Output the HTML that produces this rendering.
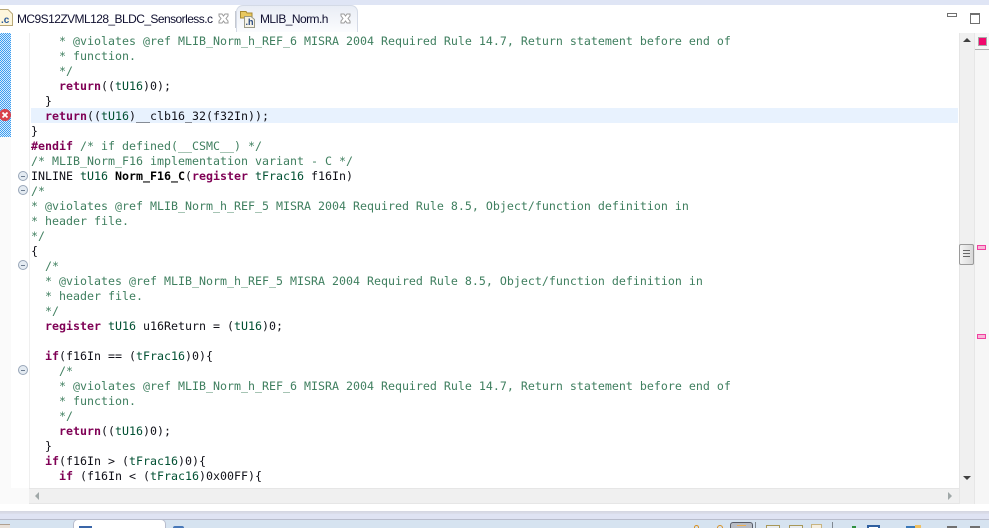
<!DOCTYPE html>
<html><head><meta charset="utf-8"><style>
html,body{margin:0;padding:0;background:#fff;}
body{width:989px;height:528px;position:relative;overflow:hidden;font-family:"Liberation Sans",sans-serif;}
div{position:absolute;}
.l{left:31px;height:15px;white-space:pre;font:11.63px/15px "DejaVu Sans Mono","Liberation Mono",monospace;color:#101018;margin-top:1px;}
.c{color:#3f7f5f}.k{color:#7f0055;font-weight:bold}.t{color:#005032}.b{font-weight:bold;color:#000}
.f{left:18px;width:8px;height:8px;border:1px solid #98a6b8;border-radius:50%;background:#e4ebf2;}
.f:after{content:"";position:absolute;left:2px;top:3.5px;width:4px;height:1px;background:#6c7c90;}
.tab{font-size:12px;color:#101030;white-space:pre;line-height:16px;letter-spacing:-.56px;}
</style></head><body>
<div style="left:0;top:0;width:989px;height:5px;background:#dfe5f5"></div>

<!-- tabs -->
<div style="left:236px;top:5px;width:122px;height:27px;background:linear-gradient(#e9edf5,#fbfcfe);border:1px solid #d4dae6;border-bottom:0;border-radius:7px 7px 0 0;box-sizing:border-box"></div>
<div style="left:235px;top:11px;width:1px;height:17px;background:#c4c8d0"></div>
<svg style="position:absolute;left:0;top:9px" width="14" height="18"><path d="M-2 .5H8L12.500 5V16.500H-2Z" fill="#fdf6dc" stroke="#b9a878"/><text x="1" y="14" font-size="10" font-weight="bold" fill="#2a5a9a" font-family="Liberation Sans">.c</text></svg>
<div class="tab" style="left:17px;top:11px">MC9S12ZVML128_BLDC_Sensorless.c</div>
<svg style="position:absolute;left:218px;top:13px" width="11" height="11"><path d="M1 1L4 1L5.500 3L7 1L10 1L10 3L8 5.500L10 8L10 10L7 10L5.500 8L4 10L1 10L1 8L3 5.500L1 3Z" fill="#fff" stroke="#9a9a9a"/></svg>
<svg style="position:absolute;left:240px;top:10px" width="16" height="18"><path d="M.5 1.500H6L7 3H12V8H.5Z" fill="#e8c860" stroke="#a88a30"/><path d="M4.500 6.500H11L14.500 9.500V17.500H4.500Z" fill="#f6f3e6" stroke="#9a9a88"/><text x="5.500" y="15" font-size="9" font-weight="bold" fill="#2a4a80" font-family="Liberation Sans">.h</text></svg>
<div class="tab" style="left:260px;top:11px">MLIB_Norm.h</div>
<svg style="position:absolute;left:340px;top:13px" width="11" height="11"><path d="M1 1L4 1L5.500 3L7 1L10 1L10 3L8 5.500L10 8L10 10L7 10L5.500 8L4 10L1 10L1 8L3 5.500L1 3Z" fill="#fff" stroke="#9a9a9a"/></svg>
<!-- min/max -->
<div style="left:947px;top:13px;width:8px;height:2px;border:1px solid #707070"></div>
<div style="left:970px;top:13px;width:8px;height:8px;border:1px solid #707070;border-top-width:2px"></div>

<!-- left ruler -->
<div style="left:0;top:33px;width:11px;height:104px;background-color:#5fb0f0;background-image:repeating-conic-gradient(#3c9cf0 0 25%,#d8ecfc 0 50%);background-size:2px 2px"></div>
<div style="left:0;top:137px;width:11px;height:351px;background:#fafafa"></div>
<div style="left:29px;top:33px;width:1px;height:455px;background:#efefef"></div>
<!-- highlight -->
<div style="left:31px;top:108px;width:927px;height:15px;background:#e8f2fe"></div>
<!-- error -->
<div style="left:-1px;top:109px;width:12px;height:12px;border-radius:50%;background:#d8404a"></div>
<svg style="position:absolute;left:-1px;top:109px" width="12" height="12"><path d="M3.500 3.500L8.500 8.500M8.500 3.500L3.500 8.500" stroke="#fff" stroke-width="1.800"/></svg>

<!-- code -->
<div class="l" style="top:33px"><span class="c">    * @violates @ref MLIB_Norm_h_REF_6 MISRA 2004 Required Rule 14.7, Return statement before end of</span></div>
<div class="l" style="top:48px"><span class="c">    * function.</span></div>
<div class="l" style="top:63px"><span class="c">    */</span></div>
<div class="l" style="top:78px">    <span class="k">return</span>((<span class="t">tU16</span>)0);</div>
<div class="l" style="top:93px">  }</div>
<div class="l" style="top:108px">  <span class="k">return</span>((<span class="t">tU16</span>)__clb16_32(f32In));</div>
<div class="l" style="top:123px">}</div>
<div class="l" style="top:138px"><span class="k">#endif</span> <span class="c">/* if defined(__CSMC__) */</span></div>
<div class="l" style="top:153px"><span class="c">/* MLIB_Norm_F16 implementation variant - C */</span></div>
<div class="l" style="top:168px">INLINE <span class="t">tU16</span> <span class="b">Norm_F16_C</span>(<span class="k">register</span> <span class="t">tFrac16</span> f16In)</div>
<div class="l" style="top:183px"><span class="c">/*</span></div>
<div class="l" style="top:198px"><span class="c">* @violates @ref MLIB_Norm_h_REF_5 MISRA 2004 Required Rule 8.5, Object/function definition in</span></div>
<div class="l" style="top:213px"><span class="c">* header file.</span></div>
<div class="l" style="top:228px"><span class="c">*/</span></div>
<div class="l" style="top:243px">{</div>
<div class="l" style="top:258px"><span class="c">  /*</span></div>
<div class="l" style="top:273px"><span class="c">  * @violates @ref MLIB_Norm_h_REF_5 MISRA 2004 Required Rule 8.5, Object/function definition in</span></div>
<div class="l" style="top:288px"><span class="c">  * header file.</span></div>
<div class="l" style="top:303px"><span class="c">  */</span></div>
<div class="l" style="top:318px">  <span class="k">register</span> <span class="t">tU16</span> u16Return = (<span class="t">tU16</span>)0;</div>
<div class="l" style="top:348px">  <span class="k">if</span>(f16In == (<span class="t">tFrac16</span>)0){</div>
<div class="l" style="top:363px"><span class="c">    /*</span></div>
<div class="l" style="top:378px"><span class="c">    * @violates @ref MLIB_Norm_h_REF_6 MISRA 2004 Required Rule 14.7, Return statement before end of</span></div>
<div class="l" style="top:393px"><span class="c">    * function.</span></div>
<div class="l" style="top:408px"><span class="c">    */</span></div>
<div class="l" style="top:423px">    <span class="k">return</span>((<span class="t">tU16</span>)0);</div>
<div class="l" style="top:438px">  }</div>
<div class="l" style="top:453px">  <span class="k">if</span>(f16In &gt; (<span class="t">tFrac16</span>)0){</div>
<div class="l" style="top:468px">    <span class="k">if</span> (f16In &lt; (<span class="t">tFrac16</span>)0x00FF){</div>

<!-- fold markers -->
<div class="f" style="top:171px"></div>
<div class="f" style="top:185px"></div>
<div class="f" style="top:260px"></div>
<div class="f" style="top:365px"></div>

<!-- horizontal scrollbar -->
<div style="left:29px;top:488px;width:930px;height:16px;background:#f0f0f0;border-top:1px solid #e6e6e6;border-bottom:1px solid #e6e6e6;box-sizing:border-box"></div>
<div style="left:35px;top:492px;width:0;height:0;border:4px solid transparent;border-right:4px solid #a0a8a8;border-left:0"></div>
<div style="left:948px;top:492px;width:0;height:0;border:4px solid transparent;border-left:4px solid #a0a8a8;border-right:0"></div>
<div style="left:0;top:488px;width:29px;height:16px;background:#fafafa"></div>

<!-- vertical scrollbar -->
<div style="left:959px;top:33px;width:16px;height:471px;background:#f0f0f0;border-left:1px solid #e6e6e6;border-right:1px solid #e6e6e6;box-sizing:border-box"></div>
<div style="left:975px;top:33px;width:14px;height:471px;background:#f6f6f6"></div>
<div style="left:963px;top:38px;width:0;height:0;border:4px solid transparent;border-bottom:4px solid #404040;border-top:0"></div>
<div style="left:963px;top:476px;width:0;height:0;border:4px solid transparent;border-top:4px solid #404040;border-bottom:0"></div>
<div style="left:959px;top:244px;width:15px;height:21px;background:linear-gradient(90deg,#f4f4f4,#d8d8d8);border:1px solid #9a9a9a;box-sizing:border-box;border-radius:2px"></div>
<svg style="position:absolute;left:962px;top:249px" width="9" height="11"><path d="M1 1.500H8M1 4.500H8M1 7.500H8" stroke="#666" stroke-width="1"/></svg>

<!-- overview ruler -->
<div style="left:978px;top:37px;width:7px;height:7px;background:#f0086c;border:1px solid #a8a8a8"></div>
<div style="left:975px;top:49px;width:14px;height:1px;background:#b0b0b0"></div>
<div style="left:977px;top:245px;width:7px;height:3px;background:#f8b8d8;border:1px solid #f040a0"></div>
<div style="left:977px;top:334px;width:7px;height:3px;background:#f8b8d8;border:1px solid #f040a0"></div>

<!-- bottom -->
<div style="left:0;top:504px;width:989px;height:7px;background:#fff"></div>
<div style="left:0;top:511px;width:989px;height:3px;background:linear-gradient(#d4d6e0,#dcdfec)"></div>
<div style="left:0;top:514px;width:989px;height:5px;background:#dfe3f3"></div>
<div style="left:0;top:519px;width:989px;height:1px;background:#b8bccc"></div>
<div style="left:0;top:520px;width:989px;height:8px;background:#d6e3f0"></div>
<div style="left:73px;top:519px;width:93px;height:9px;background:#fff;border:1px solid #b8bccc;border-bottom:0;border-radius:5px 5px 0 0;box-sizing:border-box"></div>
<div style="left:79px;top:526px;width:13px;height:2px;background:#3a66a8"></div>
<div style="left:173px;top:526px;width:11px;height:2px;border-top:2px solid #4878b8;border-radius:6px 6px 0 0;box-sizing:border-box"></div>
<div style="left:0;top:524px;width:10px;height:4px;background:#e8e0d8;border-top:1px solid #b0a090;box-sizing:border-box"></div>
<!-- toolbar fragments -->
<div style="left:694px;top:525px;width:5px;height:3px;border:1px solid #d89020;border-bottom:0;border-radius:3px 3px 0 0;box-sizing:border-box"></div>
<div style="left:717px;top:525px;width:6px;height:3px;border:1px solid #d89020;border-bottom:0;border-radius:3px 3px 0 0;box-sizing:border-box"></div>
<div style="left:730px;top:522px;width:23px;height:6px;background:#b8bcc4;border:1px solid #585c68;border-bottom:0;border-radius:3px 3px 0 0;box-sizing:border-box"></div>
<div style="left:737px;top:525px;width:9px;height:1px;background:#f0b050"></div>
<div style="left:755px;top:522px;width:1px;height:6px;background:#808890"></div>
<div style="left:766px;top:525px;width:14px;height:3px;background:#e8ecf0;border:1px solid #a89858;border-bottom:0;box-sizing:border-box"></div>
<div style="left:789px;top:525px;width:14px;height:3px;background:#e8ecf0;border:1px solid #a89858;border-bottom:0;box-sizing:border-box"></div>
<div style="left:811px;top:524px;width:11px;height:4px;background:#f4eee0;border:1px solid #c8b480;border-bottom:0;box-sizing:border-box"></div>
<div style="left:832px;top:522px;width:1px;height:6px;background:#808890"></div>
<div style="left:852px;top:526px;width:4px;height:2px;background:#309040"></div>
<div style="left:867px;top:525px;width:13px;height:3px;background:#fff;border:2px solid #2f5f9f;border-bottom:0;box-sizing:border-box"></div>
<div style="left:906px;top:526px;width:10px;height:2px;background:#3a78b8"></div>
<div style="left:915px;top:525px;width:6px;height:3px;background:#f0c060"></div>
<div style="left:947px;top:526px;width:10px;height:2px;background:#707070"></div>
<div style="left:970px;top:526px;width:10px;height:2px;background:#707070"></div>
</body></html>
